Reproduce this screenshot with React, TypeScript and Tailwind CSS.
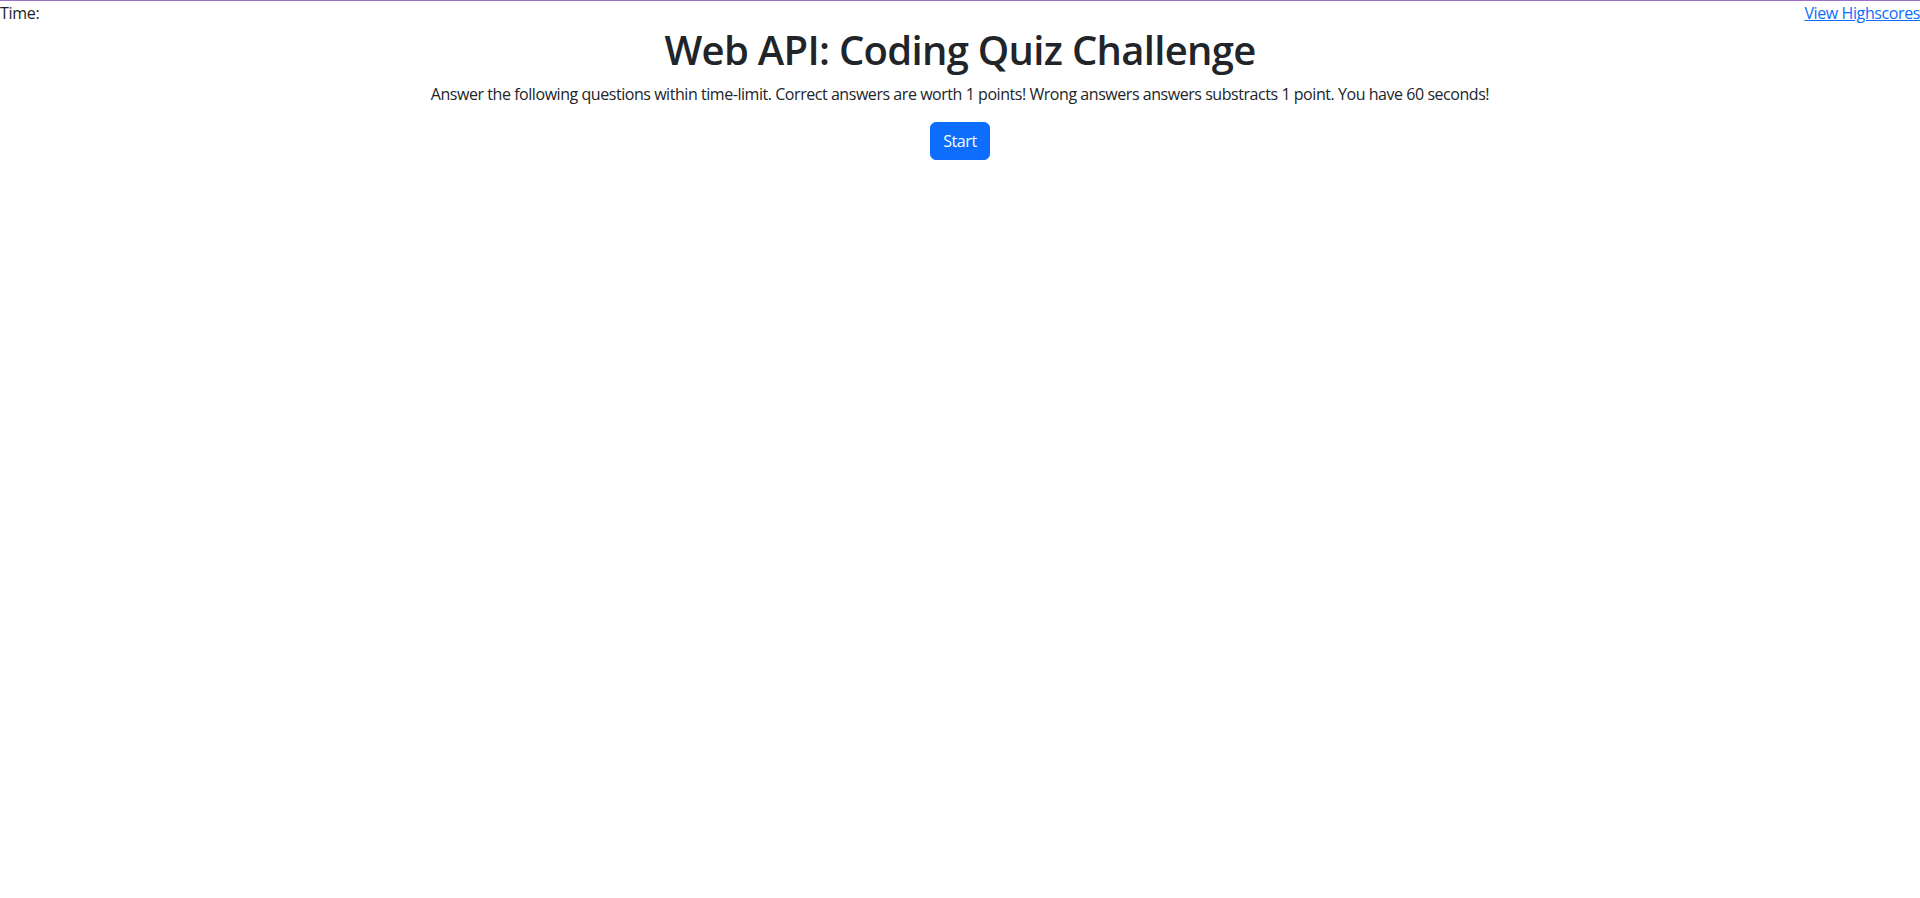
import React from "react";

const App: React.FC = () => {
  return (
    <div
      className="min-h-[898px] bg-white text-[#212529] border-t border-[#9b6fc4]"
      style={{ fontFamily: '"Segoe UI", "Open Sans", "Liberation Sans", sans-serif' }}
    >
      <header className="flex justify-between items-start text-base leading-6">
        <span className="tracking-[-0.3px]">Time:</span>
        <a href="#" className="text-[#0d6efd] underline tracking-[-0.4px]">
          View Highscores
        </a>
      </header>

      <main className="flex flex-col items-center text-center mt-[1px]">
        <h1 className="text-[40px] font-semibold leading-[1.2] mb-2 tracking-[-0.7px]">
          Web API: Coding Quiz Challenge
        </h1>
        <p className="text-base leading-6 mb-4 tracking-[-0.45px]">
          Answer the following questions within time-limit. Correct answers are worth 1 points! Wrong
          answers answers substracts 1 point. You have 60 seconds!
        </p>
        <button className="bg-[#0d6efd] text-white text-base leading-6 px-3 py-1.5 rounded-md border border-[#0d6efd] tracking-[-0.4px]">
          Start
        </button>
      </main>
    </div>
  );
};

export default App;
